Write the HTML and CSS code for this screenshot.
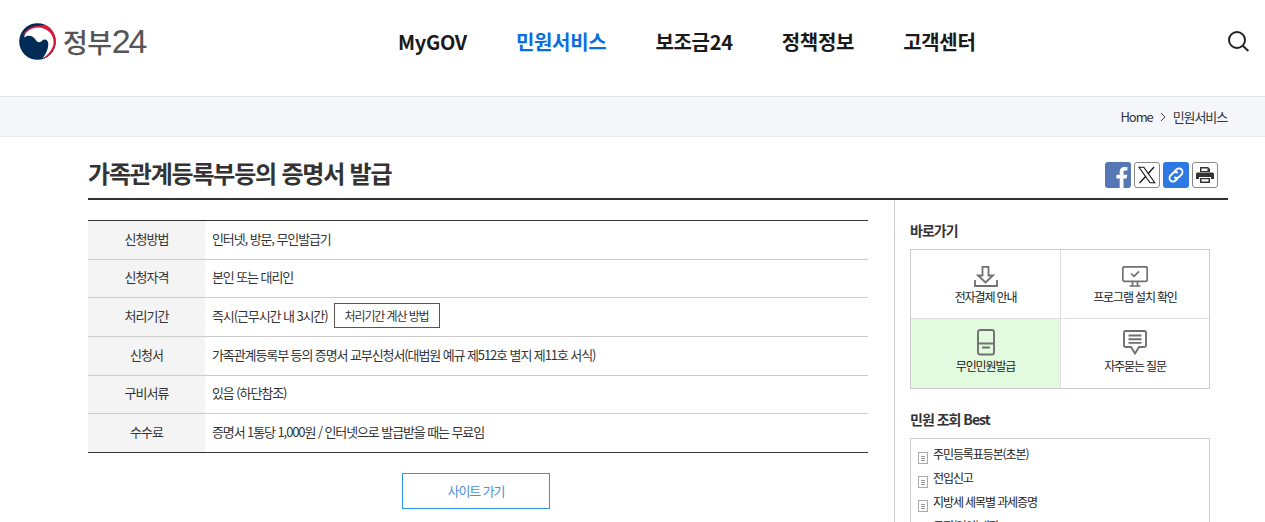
FILE: index.html
```html
<!DOCTYPE html>
<html lang="ko">
<head>
<meta charset="utf-8">
<title>가족관계등록부등의 증명서 발급</title>
<link rel="stylesheet" href="styles.css">
</head>
<body>
<header class="top">
  <a class="logo" href="#">
    <svg class="logo-mark" width="37" height="37" viewBox="0 0 37 37">
      <circle cx="18.500" cy="18.500" r="18.300" fill="#002b57"/>
      <path d="M3.500 12.500C7 6 13.500 2.800 20 2.800C22 2.800 24 1.800 26 1.800A18.300 18.300 0 0 1 36.800 18.500C36.800 26 31 33.500 24 36C29 31 31.500 25 31 19C29 10 22 7 17 8C12 8.500 7 10 3.500 12.500Z" fill="#e0173c"/>
      <path d="M5 14.500C6.500 8 13 4.600 19 4.600C27.500 4.600 34.600 11 34.600 19C34.600 25.500 29.500 31.800 23.500 35.500C27.500 30.500 29.800 24.500 29.200 20C28.500 16 25 15.500 23 17.800C21 20.300 18 19.300 16.500 16.500C14 12.500 9 11.500 5 14.500Z" fill="#fff"/>
    </svg>
    <span class="logo-text">정부<span class="logo-num">24</span></span>
  </a>
  <nav class="gnb">
    <a href="#">MyGOV</a>
    <a href="#" class="on">민원서비스</a>
    <a href="#">보조금24</a>
    <a href="#">정책정보</a>
    <a href="#">고객센터</a>
  </nav>
  <svg class="search" width="21" height="21" viewBox="0 0 21 21" fill="none" stroke="#222" stroke-width="2">
    <circle cx="9" cy="9" r="8"/>
    <path d="M14.800 14.800L20.300 20"/>
  </svg>
</header>
<div class="crumb">
  <a href="#" class="home">Home</a>
  <svg width="6" height="10" viewBox="0 0 6 10" fill="none" stroke="#444"><path d="M1 1l4 4-4 4"/></svg>
  <a href="#">민원서비스</a>
</div>
<main class="wrap">
  <div class="title-row">
    <h1>가족관계등록부등의 증명서 발급</h1>
    <div class="share">
      <a class="sbtn fb" href="#"><svg width="26" height="26" viewBox="0 0 26 26"><path d="M18.500 26v-9.500h3.200l.5-3.800h-3.700v-2.400c0-1.100.4-1.800 1.900-1.800h2V5.100c-.4-.1-1.600-.2-2.900-.2-2.900 0-4.800 1.700-4.800 4.900v2.900h-3.300v3.800h3.300V26z" fill="#fff"/></svg></a>
      <a class="sbtn line" href="#"><svg width="18" height="18" viewBox="0 0 18 18"><path d="M1 1.200h4.800l11 15.600H12Z" fill="none" stroke="#111" stroke-width="1.100"/><path d="M16 1L10 7.800M7.800 10.300L1.500 17" stroke="#111" stroke-width="1.300" fill="none"/></svg></a>
      <a class="sbtn link" href="#"><svg width="20" height="20" viewBox="0 0 20 20" fill="none" stroke="#fff" stroke-width="1.800"><path d="M8.500 6.500l2-2a3.300 3.300 0 0 1 5 5l-2.500 2.500a3.300 3.300 0 0 1-4.700 0"/><path d="M11.500 13.500l-2 2a3.300 3.300 0 0 1-5-5L7 8a3.300 3.300 0 0 1 4.700 0"/></svg></a>
      <a class="sbtn line" href="#"><svg width="18" height="16" viewBox="0 0 18 16"><path d="M4 0h8l2 2v3H4zM1.500 5.500h15A1.500 1.500 0 0 1 18 7v5h-3v-2H3v2H0V7a1.500 1.500 0 0 1 1.500-1.500z" fill="#333"/><path d="M4 11h10v5H4z" fill="#333"/><path d="M5.500 12.200h7v2.300h-7zM5.500 1.500h6v2.500h-6z" fill="#fff"/></svg></a>
    </div>
  </div>
  <div class="cols">
    <section class="content">
      <table class="info">
        <tr><th>신청방법</th><td>인터넷, 방문, 무인발급기</td></tr>
        <tr><th>신청자격</th><td>본인 또는 대리인</td></tr>
        <tr><th>처리기간</th><td>즉시(근무시간 내 3시간)<a class="calc" href="#">처리기간 계산 방법</a></td></tr>
        <tr><th>신청서</th><td>가족관계등록부 등의 증명서 교부신청서(대법원 예규 제512호 별지 제11호 서식)</td></tr>
        <tr><th>구비서류</th><td>있음 (하단참조)</td></tr>
        <tr><th>수수료</th><td>증명서 1통당 1,000원 / 인터넷으로 발급받을 때는 무료임</td></tr>
      </table>
      <div class="go"><a href="#">사이트 가기</a></div>
    </section>
    <aside class="side">
      <h2>바로가기</h2>
      <div class="quick">
        <a href="#">
          <span class="qicon"><svg width="24" height="21" viewBox="0 0 24 21" fill="none" stroke="#707070" stroke-width="1.800"><path d="M8.500 .9h6v8.600h4.500L11.500 16.500 4 9.500h4.500z"/><path d="M1 14v6h22v-6"/></svg></span>
          <span class="qlabel">전자결제 안내</span>
        </a>
        <a href="#">
          <span class="qicon"><svg width="26" height="21" viewBox="0 0 26 21" fill="none" stroke="#707070" stroke-width="1.700"><rect x=".8" y=".8" width="24.400" height="14.500" rx="1.500"/><path d="M9 7.500l3 2.800 5-5"/><path d="M10.500 15.500v4M15.500 15.500v4M7.500 20h11"/></svg></span>
          <span class="qlabel">프로그램 설치 확인</span>
        </a>
        <a href="#" class="hl">
          <span class="qicon"><svg width="18" height="27" viewBox="0 0 18 27" fill="none" stroke="#707070" stroke-width="1.900"><rect x="1" y="1" width="16" height="24.500" rx="2"/><path d="M1 14.500h16M5 18.500h8"/></svg></span>
          <span class="qlabel">무인민원발급</span>
        </a>
        <a href="#">
          <span class="qicon"><svg width="24" height="26" viewBox="0 0 24 26" fill="none" stroke="#707070" stroke-width="1.900"><path d="M2.500 1h19A1.500 1.500 0 0 1 23 2.500v13a1.500 1.500 0 0 1-1.500 1.500H16l-4 6.500L8 17H2.500A1.500 1.500 0 0 1 1 15.500v-13A1.500 1.500 0 0 1 2.500 1z"/><path d="M5.500 5.500h13M5.500 9.200h13M5.500 12.900h13"/></svg></span>
          <span class="qlabel">자주묻는 질문</span>
        </a>
      </div>
      <h2 class="best-title">민원 조회 Best</h2>
      <ul class="best">
        <li>주민등록표등본(초본)</li>
        <li>전입신고</li>
        <li>지방세 세목별 과세증명</li>
        <li>토지(임야)대장</li>
      </ul>
    </aside>
  </div>
</main>
</body>
</html>
```

FILE: styles.css
```css
* { box-sizing: border-box; }
html, body { margin: 0; height: 522px; overflow: hidden; background: #fff; }
body { font-family: "Noto Sans CJK KR", "Noto Sans", sans-serif; color: #333; font-size: 13px; letter-spacing: -1.1px; }
a { color: inherit; text-decoration: none; }
.top { height: 96px; display: flex; align-items: flex-start; padding: 23px 16px 0 19px; }
.logo { display: flex; align-items: center; gap: 7px; width: 379px; height: 37px; }
.logo-text { font-size: 27px; line-height: 37px; font-weight: 500; color: #555; letter-spacing: -.5px; }
.logo-num { font-family: "Liberation Sans", sans-serif; font-size: 34px; font-weight: 400; letter-spacing: -2.200px; }
.gnb { display: flex; gap: 49px; height: 36px; align-items: center; font-size: 20px; font-weight: 700; letter-spacing: -0.3px; color: #1a1a1a; }
.gnb .on { color: #0b6ee0; }
.search { margin-left: auto; margin-top: 8px; }
.crumb { height: 41px; background: #f4f6fa; border-top: 1px solid #e3e4ea; border-bottom: 1px solid #e8e8ea; display: flex; justify-content: flex-end; align-items: center; gap: 7px; padding-right: 38px; font-size: 13px; color: #333; }
.wrap { padding: 0 37px 0 88px; }
.title-row { height: 63px; border-bottom: 2px solid #333; display: flex; justify-content: space-between; align-items: flex-start; padding: 25px 10px 0 0; }
h1 { margin: 0; font-size: 24px; line-height: 22px; font-weight: 700; letter-spacing: -1.200px; color: #333; }
.share { display: flex; gap: 3px; }
.sbtn { width: 26px; height: 26px; border-radius: 3px; display: flex; align-items: center; justify-content: center; overflow: hidden; }
.fb { background: #5577b5; }
.link { background: #2e78e4; }
.line { border: 1px solid #888; background: #fff; }
.cols { display: flex; }
.content { width: 807px; padding-top: 20px; padding-right: 26px; border-right: 1px solid #ccc; height: 330px; }
.info { width: 780px; border-collapse: collapse; border-top: 1px solid #333; border-bottom: 1px solid #333; font-size: 13px; }
.info tr { height: 38.670px; }
.info th { width: 117px; background: #f4f4f4; font-weight: 400; letter-spacing: -.9px; border-top: 1px solid #ccc; padding: 0 0 3px; }
.info td { padding: 0 0 3px 7px; border-top: 1px solid #ccc; }
.info tr:first-child th, .info tr:first-child td { border-top: 0; }
.calc { display: inline-block; margin-left: 6px; width: 106px; height: 25px; line-height: 23px; border: 1px solid #555; text-align: center; font-size: 12px; }
.go { display: flex; justify-content: center; margin-top: 20px; padding-right: 4px; }
.go a { width: 148px; height: 36px; line-height: 34px; text-align: center; border: 1px solid #2a96f0; color: #4a8fe0; font-size: 13px; }
.side { width: 300px; margin-left: 15px; padding-top: 20px; }
h2 { margin: 0 0 9px; font-size: 14px; line-height: 20px; font-weight: 700; letter-spacing: -1px; color: #333; }
.quick { display: grid; grid-template-columns: 150px 148px; grid-template-rows: 69px 69px; border: 1px solid #ccc; width: 300px; height: 140px; }
.quick a { display: flex; flex-direction: column; align-items: center; font-size: 12px; color: #222; letter-spacing: -1.150px; }
.quick a:nth-child(odd) { border-right: 1px solid #ddd; }
.quick a:nth-child(-n+2) { border-bottom: 1px solid #ddd; }
.quick .hl { background: #e2fadd; }
.qicon { height: 37px; display: flex; align-items: flex-end; }
.qicon svg { display: block; }
.qlabel { margin-top: 1px; line-height: 18px; }
.best-title { margin-top: 20px; }
.best { margin: 0; padding: 3px 0 0 7px; list-style: none; border: 1px solid #ccc; width: 300px; height: 120px; font-size: 12px; }
.best li { height: 24px; line-height: 24px; padding-left: 15px; color: #222; position: relative; }
.best li::before { content: ""; position: absolute; left: 0; top: 10px; width: 8px; height: 10px; border: 1px solid #aaa; background: #fff repeating-linear-gradient(#fff 0 1px, #999 1px 2px) center / 4px 6px no-repeat; }
```
